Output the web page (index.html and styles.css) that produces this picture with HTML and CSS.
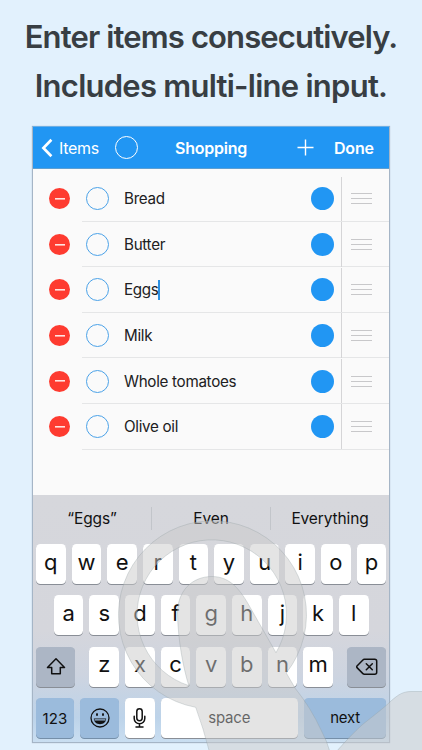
FILE: index.html
```html
<!DOCTYPE html>
<html lang="en">
<head>
<meta charset="utf-8">
<title>Shopping</title>
<link rel="stylesheet" href="styles.css">
</head>
<body>
<main class="page">
  <h1 class="headline"><span class="line-one">Enter items consecutively.</span><br><span class="line-two">Includes multi-line input.</span></h1>
  <section class="phone">
    <header class="navbar">
      <svg class="chevron" width="12" height="20" viewBox="0 0 12 20"><path d="M10.4 1.8 2.4 10l8 8.2"/></svg>
      <span class="back">Items</span>
      <span class="circle nav-circle"></span>
      <span class="title">Shopping</span>
      <svg class="plus" width="17" height="17" viewBox="0 0 17 17"><path d="M8.5.5v16M.5 8.5h16"/></svg>
      <span class="done">Done</span>
    </header>
    <ul class="list">
      <li class="row"><i class="remove"></i><div class="cell"><i class="circle"></i><span class="name">Bread</span><i class="dot"></i><span class="handle"><i class="grip"></i></span></div></li>
      <li class="row"><i class="remove"></i><div class="cell"><i class="circle"></i><span class="name">Butter</span><i class="dot"></i><span class="handle"><i class="grip"></i></span></div></li>
      <li class="row"><i class="remove"></i><div class="cell"><i class="circle"></i><span class="name">Eggs<i class="caret"></i></span><i class="dot"></i><span class="handle"><i class="grip"></i></span></div></li>
      <li class="row"><i class="remove"></i><div class="cell"><i class="circle"></i><span class="name">Milk</span><i class="dot"></i><span class="handle"><i class="grip"></i></span></div></li>
      <li class="row"><i class="remove"></i><div class="cell"><i class="circle"></i><span class="name">Whole tomatoes</span><i class="dot"></i><span class="handle"><i class="grip"></i></span></div></li>
      <li class="row"><i class="remove"></i><div class="cell"><i class="circle"></i><span class="name">Olive oil</span><i class="dot"></i><span class="handle"><i class="grip"></i></span></div></li>
    </ul>
    <div class="keyboard">
      <div class="suggestions"><span>“Eggs”</span><span>Even</span><span>Everything</span></div>
      <div class="keys">
        <div class="krow"><b>q</b><b>w</b><b>e</b><b>r</b><b>t</b><b>y</b><b>u</b><b>i</b><b>o</b><b>p</b></div>
        <div class="krow"><b>a</b><b>s</b><b>d</b><b>f</b><b>g</b><b>h</b><b>j</b><b>k</b><b>l</b></div>
        <div class="krow spread">
          <b class="side"><svg width="20" height="20" viewBox="0 0 20 20"><path d="M10 1.8 1.5 10.6h4.2v6.1h8.600v-6.100h4.200z"/></svg></b>
          <div class="krow"><b>z</b><b>x</b><b>c</b><b>v</b><b>b</b><b>n</b><b>m</b></div>
          <b class="side"><svg width="22" height="18" viewBox="0 0 22 18"><path d="M8.300 1.300h10.400q2 0 2 2v10.900q0 2-2 2H8.300q-.8 0-1.400-.6L1 9.600q-.6-.8 0-1.600l5.900-6.100q.6-.6 1.400-.6zM10.300 5.700l6 6M16.300 5.700l-6 6"/></svg></b>
        </div>
        <div class="krow bottom">
          <b class="blue num">123</b>
          <b class="blue emo"><svg width="20" height="20" viewBox="0 0 20 20"><circle cx="10" cy="10" r="9"/><path class="fill" d="M3.800 10.500h12.400c-.2 7.600-12.200 7.600-12.400 0z"/><path class="teeth" d="M5.100 11.900h9.800"/><ellipse class="fill" cx="7" cy="6.400" rx="1" ry="1.500"/><ellipse class="fill" cx="13" cy="6.400" rx="1" ry="1.500"/></svg></b>
          <b class="mic"><svg width="13" height="20" viewBox="0 0 13 20"><rect x="3.800" y=".8" width="5.400" height="12" rx="2.700"/><path d="M1.200 8.200v2.300a5.300 5.300 0 0 0 10.600 0V8.200M6.500 15.800v3M3 19h7"/></svg></b>
          <b class="space">space</b>
          <b class="blue next">next</b>
        </div>
      </div>
    </div>
  </section>
  <svg class="touch" width="422" height="750" viewBox="0 0 422 750">
    <path fill-rule="evenodd" d="M195.700 707.300A94 94 0 1 1 286.300 673L295 688Q311 708 321.500 731Q327 741 330 752H209.500Q203 727 195.700 707.300ZM188.800 685.600A74.700 74.700 0 1 1 276 652.700L250.500 608C241 591 231 576.500 212 576.500C192 576.500 177.500 591 177.500 613C178 640 183 667 188.800 685.600Z"/>
    <path d="M336 752Q351 735 362 725C377 713 385 707 391 701C399 694 403 691.500 412 691.500H424V752Z"/>
  </svg>
</main>
</body>
</html>
```
FILE: styles.css
```css
* { box-sizing: border-box; }
body { margin: 0; background: #e2f1fd; font-family: Inter, "Liberation Sans", sans-serif; }
.page { position: relative; width: 422px; height: 750px; overflow: hidden; padding-top: 12px; }
.headline { margin: 0; height: 114px; text-align: center; font-size: 31px; font-weight: 600; line-height: 49px; color: #383e43; white-space: nowrap; }
.line-one { letter-spacing: -.87px; }
.line-two { letter-spacing: -.74px; }
.phone { width: 358px; height: 617px; margin-left: 32px; border: 1px solid #a5b5c6; border-top-color: #6baee4; background: #fafafa; display: flex; flex-direction: column; box-shadow: 0 0 1px #a9b8c7; }
.navbar { height: 42px; flex: none; display: grid; grid-template-columns: 26px 56px 65px 108px 36px 1fr; align-items: center; background: #2196f3; border-bottom: 1px solid #5d9fd2; color: #fff; font-size: 16px; }
.navbar svg { fill: none; stroke: #fff; }
.chevron { margin-left: 8px; stroke-width: 2.7px; }
.back { letter-spacing: -.3px; }
.title { font-weight: 600; letter-spacing: -.23px; margin-left: -5px; }
.plus { stroke-width: 1.4px; margin-left: 9px; }
.done { font-weight: 600; margin-left: 10px; letter-spacing: -.2px; }
.circle { width: 23px; height: 23px; border: 1.25px solid #4ba2e8; border-radius: 50%; flex: none; }
.navbar .circle { border-color: #fff; }
.list { list-style: none; margin: 0; padding: 7px 0 0; height: 326px; flex: none; }
.row { height: 45.6px; display: flex; align-items: center; padding-left: 16px; }
.remove { width: 21px; height: 21px; border-radius: 50%; background: linear-gradient(#ffe4e1, #ffe4e1) center / 10px 1.6px no-repeat #fe3b30; flex: none; }
.cell { flex: 1; height: 100%; display: flex; align-items: center; margin-left: 12px; padding: 1px 0 0 4px; border-bottom: 1px solid #e5e6e7; }
.name { flex: 1; display: flex; align-items: center; margin-left: 15px; font-size: 15.2px; color: #202022; letter-spacing: -.3px; }
.caret { width: 2px; height: 20px; background: #2b91e2; margin-left: -1px; }
.dot { width: 23px; height: 23px; border-radius: 50%; background: #2196f3; }
.handle { width: 48px; height: calc(100% + 1px); border-left: 1px solid #d5d5d7; margin-left: 7px; padding-left: 9px; display: flex; align-items: center; }
.grip { width: 21px; height: 11px; border: solid #c8c8ca; border-width: 1px 0; background: linear-gradient(#c8c8ca, #c8c8ca) center / 100% 1px no-repeat; }
.keyboard { flex: 1; background: linear-gradient(#d6d7dc 0, #d5d6dc 55%, #cdd4e0 73%, #bdd3e9 90%, #c9def1 100%); color: #111; }
.suggestions { height: 49px; padding-bottom: 2px; display: grid; grid-template-columns: 118px 119px 119px; align-items: center; text-align: center; font-size: 15.5px; letter-spacing: -.12px; }
.suggestions span { line-height: 23px; }
.suggestions span + span { border-left: 1px solid #c2c5ca; }
.keys { padding: 0 3px; display: grid; row-gap: 11.4px; }
.krow { display: flex; justify-content: center; gap: 6.05px; }
.spread { justify-content: space-between; }
.krow b { width: 29.6px; height: 40px; border-radius: 4.5px; display: flex; align-items: center; justify-content: center; background: #fff; box-shadow: 0 1px 0 #898e96; font-size: 22px; font-weight: 400; padding-bottom: 5px; }
.krow svg { fill: none; stroke: #111; stroke-width: 1.5px; stroke-linejoin: round; stroke-linecap: round; }
.krow .side { width: 39.3px; background: #acb6c5; padding: 0; }
.krow .blue { background: #9bbbdc; box-shadow: 0 1px 0 #758fa9; padding: 0; }
.krow .num { width: 38px; font-size: 15px; letter-spacing: .1px; }
.krow .emo { width: 39px; }
.krow .mic { padding: 0; }
.krow .space { width: 137px; font-size: 15px; padding: 0 0 2px; color: #000; letter-spacing: -.2px; }
.krow .next { flex: 1; font-size: 15px; padding-bottom: 2px; letter-spacing: -.2px; }
.krow .emo svg { stroke-width: 1.3px; }
.krow .fill { fill: #111; stroke: none; }
.krow .teeth { stroke: #9bbbdc; stroke-width: 1.4px; }
.touch { position: absolute; left: 0; top: 0; pointer-events: none; }
.touch path { fill: rgba(201, 201, 201, .5); stroke: rgba(145, 155, 160, .45); stroke-width: .7px; }
```
